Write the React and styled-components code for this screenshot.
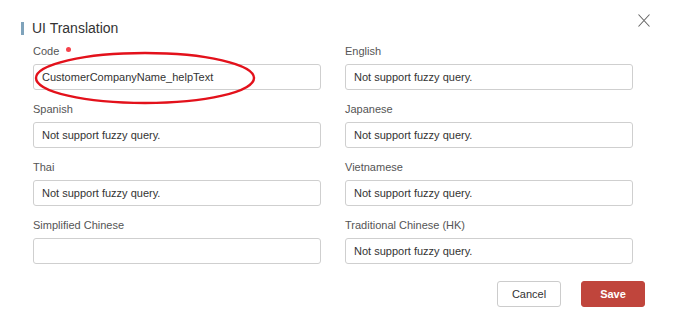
import styled, { createGlobalStyle } from "styled-components";

const GlobalStyle = createGlobalStyle`
    html, body {
        margin: 0;
        padding: 0;
        background: #fff;
    }
    body {
        font-family: "Liberation Sans", Arial, sans-serif;
        color: #333;
    }
`

const campos = [
    { label: "Code", value: "CustomerCompanyName_helpText", required: true, marcado: true },
    { label: "English", placeholder: "Not support fuzzy query." },
    { label: "Spanish", placeholder: "Not support fuzzy query." },
    { label: "Japanese", placeholder: "Not support fuzzy query." },
    { label: "Thai", placeholder: "Not support fuzzy query." },
    { label: "Vietnamese", placeholder: "Not support fuzzy query." },
    { label: "Simplified Chinese", placeholder: "" },
    { label: "Traditional Chinese (HK)", placeholder: "Not support fuzzy query." },
];

const App = () => {
    return (
        <>
            <GlobalStyle />
            <Dialogo>
                <Cabecera>
                    <Barra />
                    <Titulo>UI Translation</Titulo>
                </Cabecera>
                <Cerrar aria-label="close">
                    <svg width="12" height="13" viewBox="0 0 12 13">
                        <path d="M0.5 0.5 L11.5 12.5 M11.5 0.5 L0.5 12.5" stroke="#666" strokeWidth="1.1" fill="none" />
                    </svg>
                </Cerrar>
                <Rejilla>
                    {campos.map((c) => (
                        <Campo key={c.label}>
                            <Etiqueta>
                                {c.label}
                                {c.required && <Punto />}
                            </Etiqueta>
                            <Input
                                type="text"
                                defaultValue={c.value}
                                placeholder={c.placeholder}
                            />
                            {c.marcado && (
                                <Marca width="226" height="56" viewBox="0 0 226 56">
                                    <ellipse cx="113" cy="28" rx="109" ry="25" fill="none" stroke="#e3111b" strokeWidth="2.4" />
                                </Marca>
                            )}
                        </Campo>
                    ))}
                </Rejilla>
                <Pie>
                    <Boton>Cancel</Boton>
                    <Boton $primario>Save</Boton>
                </Pie>
            </Dialogo>
        </>
    );
}

const Dialogo = styled.div`
    position: relative;
    width: 675px;
    height: 321px;
    box-sizing: border-box;
    padding-top: 21px;
    background: #fff;
`

const Cabecera = styled.div`
    display: flex;
    align-items: center;
    gap: 8px;
    padding-left: 21px;
    height: 14px;
`

const Barra = styled.span`
    width: 3px;
    height: 13px;
    background: #7fa3bb;
`

const Titulo = styled.h3`
    margin: 0;
    font-size: 14px;
    line-height: 14px;
    font-weight: normal;
    color: #333;
`

const Cerrar = styled.button`
    position: absolute;
    top: 14px;
    right: 25px;
    padding: 0;
    border: 0;
    background: none;
    display: flex;
    cursor: pointer;
`

const Rejilla = styled.div`
    margin-top: 9px;
    padding-left: 33px;
    display: grid;
    grid-template-columns: 288px 288px;
    column-gap: 24px;
    row-gap: 12px;
`

const Campo = styled.div`
    position: relative;
    display: flex;
    flex-direction: column;
`

const Etiqueta = styled.label`
    display: flex;
    align-items: center;
    font-size: 11px;
    line-height: 14px;
    height: 14px;
    color: #555;
    margin-bottom: 6px;
`

const Punto = styled.span`
    width: 5px;
    height: 5px;
    border-radius: 50%;
    background: #f5424b;
    margin-left: 7px;
    margin-top: -4px;
`

const Input = styled.input`
    box-sizing: border-box;
    height: 26px;
    width: 100%;
    padding: 0 8px;
    border: 1px solid #cfcfcf;
    border-radius: 3px;
    font-family: "Liberation Sans", Arial, sans-serif;
    font-size: 11px;
    color: #333;
    outline: none;
    &::placeholder {
        color: #333;
        opacity: 1;
    }
`

const Marca = styled.svg`
    position: absolute;
    left: -1px;
    top: 6px;
    overflow: visible;
    pointer-events: none;
`

const Pie = styled.div`
    display: flex;
    justify-content: flex-end;
    gap: 20px;
    margin-top: 17px;
    padding-right: 30px;
`

const Boton = styled.button`
    box-sizing: border-box;
    width: 64px;
    height: 26px;
    border-radius: 3px;
    font-family: "Liberation Sans", Arial, sans-serif;
    font-size: 11px;
    cursor: pointer;
    border: 1px solid ${(p) => (p.$primario ? "#c0453c" : "#cccccc")};
    background: ${(p) => (p.$primario ? "#c0453c" : "#fff")};
    color: ${(p) => (p.$primario ? "#fff" : "#333")};
    font-weight: ${(p) => (p.$primario ? "bold" : "normal")};
`

export default App;
